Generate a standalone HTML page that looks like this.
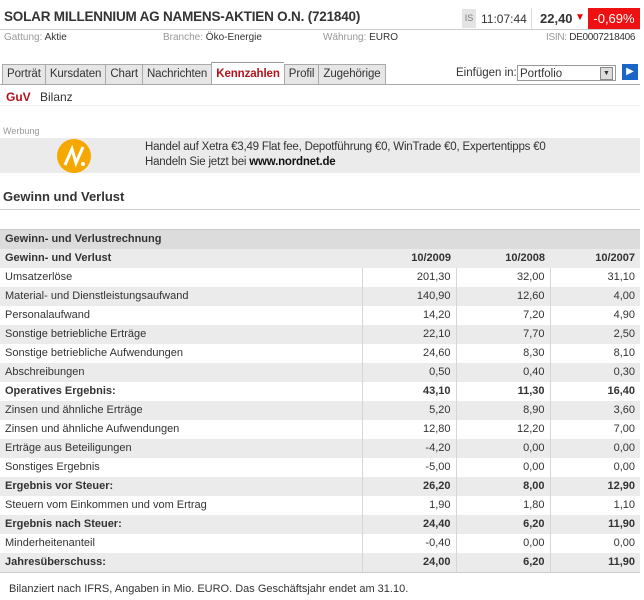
<!DOCTYPE html>
<html><head><meta charset="utf-8"><style>
body{margin:0;width:644px;height:600px;overflow:hidden;background:#fff;font-family:"Liberation Sans",sans-serif;font-size:11px;color:#333;position:relative}
.a{position:absolute;white-space:nowrap}
.g{color:#999}
.tabs{position:absolute;left:2px;top:64px;height:20px;display:flex}
.tab{border:1px solid #aaa;border-right:none;background:#e6e6e6;padding:0 4px;line-height:19px;font-size:11.5px;letter-spacing:-0.1px;color:#333;height:19px}
.tab.act{background:#fff;color:#b5121b;font-weight:bold;border-top:1px solid #999;height:21px;margin-top:-2px;line-height:22px;border-bottom:none;padding:0 4px}
table{position:absolute;left:0;top:229px;width:640px;border-collapse:collapse;font-size:11px;table-layout:fixed}
td{height:19px;padding:0 5px;line-height:19px;overflow:hidden}
td.n{text-align:right;border-left:1px solid #d6d6d6}
tr.e td{background:#ebebeb}
tr.b td{font-weight:bold}
</style></head><body>
<div class="a" style="left:4px;top:9px;font-size:13.5px;font-weight:bold;color:#333;letter-spacing:-0.2px">SOLAR MILLENNIUM AG NAMENS-AKTIEN O.N. (721840)</div>
<div class="a" style="left:462px;top:9px;width:14px;height:19px;background:#e4e4e4;font-size:9px;line-height:19px;color:#777;text-align:center">IS</div>
<div class="a" style="left:481px;top:12px;font-size:12px;color:#333">11:07:44</div>
<div class="a" style="left:531px;top:8px;width:1px;height:22px;background:#ddd"></div>
<div class="a" style="left:540px;top:11px;font-size:13px;font-weight:bold;color:#333">22,40</div>
<div class="a" style="left:575px;top:12px;color:#e00;font-size:10px">&#9660;</div>
<div class="a" style="left:588px;top:8px;width:52px;height:22px;background:#ee1111;color:#fff;font-size:13px;line-height:22px;text-align:center">-0,69%</div>
<div class="a" style="left:0;top:29px;width:640px;height:1px;background:#ccc"></div>
<div class="a" style="left:4px;top:32px;font-size:10px"><span class="g">Gattung:</span> Aktie</div>
<div class="a" style="left:163px;top:32px;font-size:10px"><span class="g">Branche:</span> Öko-Energie</div>
<div class="a" style="left:323px;top:32px;font-size:10px"><span class="g">Währung:</span> EURO</div>
<div class="a" style="left:546px;top:32px;font-size:10px;letter-spacing:-0.3px"><span class="g">ISIN:</span> DE0007218406</div>
<div class="tabs"><div class="tab">Porträt</div><div class="tab">Kursdaten</div><div class="tab">Chart</div><div class="tab">Nachrichten</div><div class="tab act">Kennzahlen</div><div class="tab">Profil</div><div class="tab" style="border-right:1px solid #aaa">Zugehörige</div></div>
<div class="a" style="left:0;top:84px;width:640px;height:1px;background:#aaa"></div>
<div class="a" style="left:456px;top:67px;font-size:11.5px">Einfügen in:</div>
<div class="a" style="left:517px;top:65px;height:16px;border:1px solid #999;background:#fff;font-size:11.5px;line-height:16px;padding-left:2px;box-sizing:border-box;width:99px">Portfolio</div>
<div class="a" style="left:600px;top:67px;width:13px;height:13px;background:#ddd;border:1px solid #888;box-sizing:border-box;font-size:7px;text-align:center;line-height:12px">▼</div>
<div class="a" style="left:622px;top:64px;width:16px;height:16px;background:#1a66c8;color:#fff;font-size:10px;text-align:center;line-height:16px">▶</div>
<div class="a" style="left:6px;top:90px;font-size:12px;font-weight:bold;color:#b5121b">GuV</div>
<div class="a" style="left:40px;top:90px;font-size:12px">Bilanz</div>
<div class="a" style="left:0;top:105px;width:640px;height:1px;background:#eee"></div>
<div class="a" style="left:3px;top:126px;font-size:9px;color:#999">Werbung</div>
<div class="a" style="left:0;top:138px;width:640px;height:35px;background:#ebebeb"></div>
<div class="a" style="left:57px;top:139px;width:34px;height:34px;border-radius:50%;background:#f6a800"></div>
<svg class="a" style="left:57px;top:139px" width="34" height="34"><path d="M8 26 L15 10 L19 24 L26 8" stroke="#fff" stroke-width="3" fill="none"/><circle cx="26" cy="25" r="2" fill="#fff"/></svg>
<div class="a" style="left:145px;top:141px;font-size:11.5px;letter-spacing:-0.2px">Handel auf Xetra €3,49 Flat fee, Depotführung €0, WinTrade €0, Expertentipps €0</div>
<div class="a" style="left:145px;top:156px;font-size:11.5px;letter-spacing:-0.2px">Handeln Sie jetzt bei <b style="color:#111">www.nordnet.de</b></div>
<div class="a" style="left:3px;top:189px;font-size:13px;font-weight:bold;color:#333">Gewinn und Verlust</div>
<div class="a" style="left:0;top:209px;width:640px;height:1px;background:#ccc"></div>
<table>
<colgroup><col style="width:362px"><col style="width:94px"><col style="width:94px"><col></colgroup>
<tr><td colspan="4" style="background:#dcdcdc;font-weight:bold;border-top:1px solid #ccc;height:18px">Gewinn- und Verlustrechnung</td></tr>
<tr class="b"><td style="background:#ebebeb">Gewinn- und Verlust</td><td style="background:#ebebeb;text-align:right">10/2009</td><td style="background:#ebebeb;text-align:right">10/2008</td><td style="background:#ebebeb;text-align:right">10/2007</td></tr>
<tr><td>Umsatzerlöse</td><td class="n">201,30</td><td class="n">32,00</td><td class="n">31,10</td></tr>
<tr class="e"><td>Material- und Dienstleistungsaufwand</td><td class="n">140,90</td><td class="n">12,60</td><td class="n">4,00</td></tr>
<tr><td>Personalaufwand</td><td class="n">14,20</td><td class="n">7,20</td><td class="n">4,90</td></tr>
<tr class="e"><td>Sonstige betriebliche Erträge</td><td class="n">22,10</td><td class="n">7,70</td><td class="n">2,50</td></tr>
<tr><td>Sonstige betriebliche Aufwendungen</td><td class="n">24,60</td><td class="n">8,30</td><td class="n">8,10</td></tr>
<tr class="e"><td>Abschreibungen</td><td class="n">0,50</td><td class="n">0,40</td><td class="n">0,30</td></tr>
<tr class="b"><td>Operatives Ergebnis:</td><td class="n">43,10</td><td class="n">11,30</td><td class="n">16,40</td></tr>
<tr class="e"><td>Zinsen und ähnliche Erträge</td><td class="n">5,20</td><td class="n">8,90</td><td class="n">3,60</td></tr>
<tr><td>Zinsen und ähnliche Aufwendungen</td><td class="n">12,80</td><td class="n">12,20</td><td class="n">7,00</td></tr>
<tr class="e"><td>Erträge aus Beteiligungen</td><td class="n">-4,20</td><td class="n">0,00</td><td class="n">0,00</td></tr>
<tr><td>Sonstiges Ergebnis</td><td class="n">-5,00</td><td class="n">0,00</td><td class="n">0,00</td></tr>
<tr class="e b"><td>Ergebnis vor Steuer:</td><td class="n">26,20</td><td class="n">8,00</td><td class="n">12,90</td></tr>
<tr><td>Steuern vom Einkommen und vom Ertrag</td><td class="n">1,90</td><td class="n">1,80</td><td class="n">1,10</td></tr>
<tr class="e b"><td>Ergebnis nach Steuer:</td><td class="n">24,40</td><td class="n">6,20</td><td class="n">11,90</td></tr>
<tr><td>Minderheitenanteil</td><td class="n">-0,40</td><td class="n">0,00</td><td class="n">0,00</td></tr>
<tr class="e b" style="border-bottom:1px solid #ccc"><td>Jahresüberschuss:</td><td class="n">24,00</td><td class="n">6,20</td><td class="n">11,90</td></tr>
</table>
<div class="a" style="left:9px;top:583px;font-size:11px">Bilanziert nach IFRS, Angaben in Mio. EURO. Das Geschäftsjahr endet am 31.10.</div>
</body></html>
